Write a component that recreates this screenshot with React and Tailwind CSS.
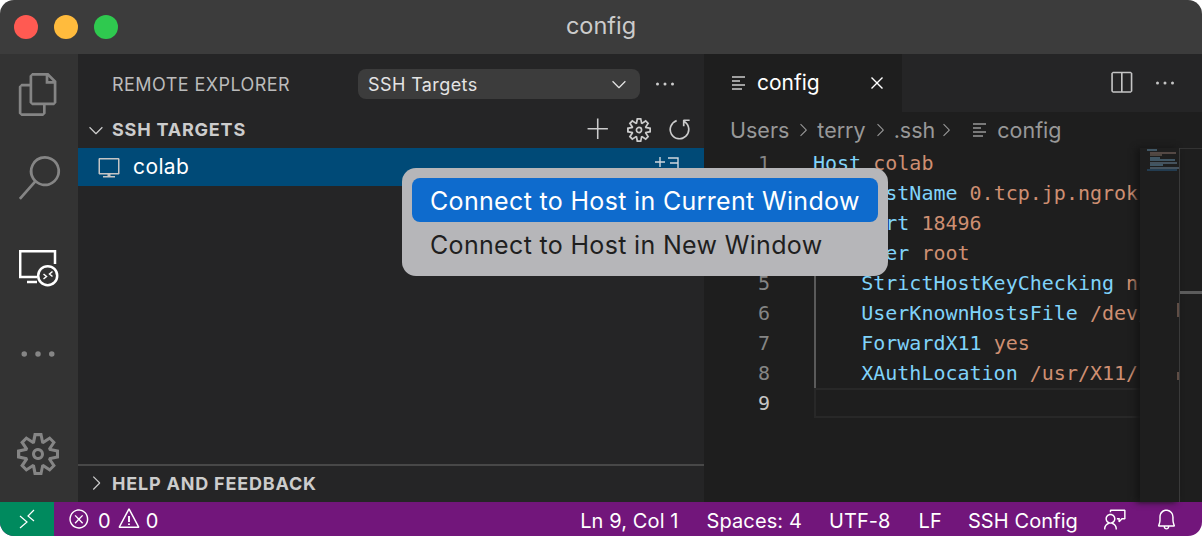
import React from 'react';
import {
  VscFiles, VscSearch, VscEllipsis, VscSettingsGear, VscChevronDown, VscChevronRight,
  VscAdd, VscRefresh, VscSplitHorizontal, VscClose, VscVm, VscError, VscWarning, VscFeedback, VscBell,
} from 'react-icons/vsc';

const uiFont = "font-['Inter','Liberation_Sans',sans-serif]";

const RemoteIcon = () => (
  <svg width="40" height="38" viewBox="0 0 40 38" fill="none" stroke="currentColor" strokeWidth="2.500">
    <path d="M18 27H1.200V1.200H36V14" />
    <path d="M8 32H18" />
    <circle cx="28.700" cy="25.700" r="9.500" />
    <path d="M24.500 24l3 2.500-3 2.500M33.500 21.500l-3 2.500 3 2.500" strokeWidth="1.500" />
  </svg>
);

const FileLines = ({ className }) => (
  <svg width="16" height="16" viewBox="0 0 16 16" fill="none" stroke="currentColor" strokeWidth="1.400" className={className}>
    <path d="M1 2H14M1 6H9M1 10H14M1 14H11" />
  </svg>
);

const RemoteStatus = () => (
  <svg width="18" height="20" viewBox="0 0 18 20" fill="none" stroke="currentColor" strokeWidth="1.200">
    <path d="M2 7l7 6-7 6M16 1L10 7l6 5" />
  </svg>
);

const codeLines = [
  [null, 'Host', 'colab'],
  ['    ', 'HostName', '0.tcp.jp.ngrok'],
  ['    ', 'Port', '18496'],
  ['    ', 'User', 'root'],
  ['    ', 'StrictHostKeyChecking', 'no'],
  ['    ', 'UserKnownHostsFile', '/dev/'],
  ['    ', 'ForwardX11', 'yes'],
  ['    ', 'XAuthLocation', '/usr/X11/'],
];

const ActivityBar = () => (
  <div className="w-[78px] shrink-0 bg-[#333333] flex flex-col items-center text-[#858585]">
    <VscFiles size={43} className="mt-[19px] ml-[-2px]" />
    <VscSearch size={44} className="mt-[40px]" />
    <div className="mt-[50px] text-white ml-[-1px]">
      <RemoteIcon />
    </div>
    <VscEllipsis size={44} className="mt-[44px] ml-[-2px]" />
    <div className="flex-1" />
    <VscSettingsGear size={42} className="mb-[27px] ml-[-3px]" />
  </div>
);

const SideBar = () => (
  <div className="w-[626px] shrink-0 bg-[#252526] flex flex-col">
    <div className="h-[60px] flex items-center pl-[34px]">
      <span className="w-[246px] text-[18px] tracking-[0.45px] text-[#bbbbbb]">REMOTE EXPLORER</span>
      <div className="w-[282px] h-[30px] rounded-[8px] bg-[#3c3c3c] flex items-center px-[10px] text-[#e4e4e4] text-[18px] tracking-[0.4px]">
        <span className="flex-1">SSH Targets</span>
        <VscChevronDown size={22} />
      </div>
      <VscEllipsis size={24} className="ml-[13px] text-[#cccccc]" />
    </div>
    <div className="h-[34px] pb-[3px] flex items-center text-[#cccccc]">
      <VscChevronDown size={22} className="ml-[7px]" />
      <span className="ml-[5px] flex-1 text-[18px] font-bold tracking-[0.8px]">SSH TARGETS</span>
      <VscAdd size={25} className="mr-[16px]" />
      <VscSettingsGear size={24} className="mr-[15px]" />
      <VscRefresh size={27} className="mr-[11px] scale-x-[-1]" />
    </div>
    <div className="h-[38px] bg-[#004a77] flex items-center pl-[19px] text-white">
      <VscVm size={24} className="text-[#c5c5c5]" />
      <span className="ml-[12px] text-[21px] tracking-[0.4px]">colab</span>
      <span className="flex-1" />
      <svg width="26" height="14" viewBox="0 0 26 14" fill="none" stroke="#d0d8de" strokeWidth="1.400" className="mr-[24px] mb-[9px]">
        <path d="M1 6H11M6 1V11M14 2H24V13H14M16 7H24" />
      </svg>
    </div>
    <div className="flex-1" />
    <div className="h-[38px] pb-[2px] border-t-2 border-[#484848] flex items-center text-[#cccccc]">
      <VscChevronRight size={22} className="ml-[7px]" />
      <span className="ml-[5px] text-[18px] font-bold tracking-[0.8px]">HELP AND FEEDBACK</span>
    </div>
  </div>
);

const Editor = () => (
  <div className="flex-1 min-w-0 bg-[#1e1e1e] flex flex-col relative">
    <div className="h-[58px] shrink-0 bg-[#252526] flex items-center">
      <div className="w-[198px] h-full bg-[#1e1e1e] flex items-center pl-[27px] text-white">
        <FileLines className="text-[#cccccc]" />
        <span className="ml-[10px] text-[21px] flex-1">config</span>
        <VscClose size={22} className="mr-[14px]" />
      </div>
      <div className="flex-1" />
      <VscSplitHorizontal size={26} className="text-[#c5c5c5] mr-[19px]" />
      <VscEllipsis size={24} className="text-[#c5c5c5] mr-[25px]" />
    </div>
    <div className="h-[36px] shrink-0 flex items-center pl-[26px] text-[21.500px] text-[#989898]">
      <span>Users</span>
      <VscChevronRight size={20} className="mx-[4px]" />
      <span>terry</span>
      <VscChevronRight size={20} className="mx-[4px]" />
      <span>.ssh</span>
      <VscChevronRight size={20} className="ml-[1px] mr-[16px]" />
      <FileLines />
      <span className="ml-[9px]">config</span>
    </div>
    <div className="flex-1 flex min-h-0">
      <div className="w-[66px] shrink-0 text-right font-['DejaVu_Sans_Mono',monospace] text-[20px] leading-[30px] text-[#858585]">
        {[1, 2, 3, 4, 5, 6, 7, 8].map((n) => (
          <div key={n}>{n}</div>
        ))}
        <div className="text-[#c6c6c6]">9</div>
      </div>
      <div className="w-[327px] ml-[43px] shrink-0 overflow-hidden font-['DejaVu_Sans_Mono',monospace] text-[20px] leading-[30px] whitespace-pre relative">
        <div className="absolute left-[1px] top-[30px] h-[210px] w-[2px] bg-[#5a5a5a]" />
        {codeLines.map(([indent, key, value]) => (
          <div key={key}>
            {indent}
            <span className="text-[#80d3fa]">{key}</span> <span className="text-[#ce8f72]">{value}</span>
          </div>
        ))}
        <div className="h-[30px] ml-[1px] border-y-2 border-[#282828] border-l-2" />
      </div>
      {/* minimap */}
      <div className="w-[40px] shrink-0 border-r border-[#3a3a3a] relative shadow-[-4px_0_6px_#151515]">
        <div className="pt-[1px] pl-[7px] flex flex-col gap-[0.500px] opacity-70">
          <div className="w-[10px] h-[2px] bg-[#4f6f82]" />
          <div className="w-[26px] ml-[3px] h-[2px] bg-[#6b5a55]" />
          <div className="w-[12px] ml-[3px] h-[2px] bg-[#63584f]" />
          <div className="w-[10px] ml-[3px] h-[2px] bg-[#4f6f82]" />
          <div className="w-[25px] ml-[3px] h-[2px] bg-[#4f6f82]" />
          <div className="w-[27px] ml-[3px] h-[2px] bg-[#566878]" />
          <div className="w-[13px] ml-[3px] h-[2px] bg-[#4f6f82]" />
          <div className="w-[29px] ml-[3px] h-[2px] bg-[#566878]" />
          <div className="w-[30px] h-[2px] bg-[#264a66]" />
        </div>
        <div className="absolute right-0 top-[155px] w-[2px] h-[14px] bg-[#5f4d45]" />
        <div className="absolute right-0 top-[224px] w-[2px] h-[8px] bg-[#5f4d45]" />
      </div>
      <div className="flex-1 relative">
        <div className="h-[1px] bg-[#333333]" />
        <div className="mt-[142px] h-[3px] bg-[#5c5c5c]" />
      </div>
    </div>
  </div>
);

const StatusBar = () => (
  <div className="h-[34px] shrink-0 bg-[#72167b] flex items-center text-[20px] tracking-[0.1px] text-white">
    <div className="w-[54px] h-full bg-[#008a5e] flex items-center justify-center">
      <RemoteStatus />
    </div>
    <VscError size={22} className="ml-[14px]" />
    <span className="ml-[8px] pt-[3px]">0</span>
    <VscWarning size={24} className="ml-[6px]" />
    <span className="ml-[5px] pt-[3px]">0</span>
    <div className="flex-1" />
    <span className="pt-[3px]">Ln 9, Col 1</span>
    <span className="ml-[28px] pt-[3px]">Spaces: 4</span>
    <span className="ml-[27px] pt-[3px]">UTF-8</span>
    <span className="ml-[28px] pt-[3px]">LF</span>
    <span className="ml-[26px] pt-[3px]">SSH Config</span>
    <VscFeedback size={23} className="ml-[26px]" />
    <VscBell size={23} className="ml-[28px] mr-[24px]" />
  </div>
);

const ContextMenu = () => (
  <div className="absolute left-[402px] top-[168px] w-[486px] h-[108px] rounded-[14px] bg-[#b6b6b9] p-[10px] text-[25px] tracking-[0.33px]">
    <div className="h-[44px] pt-[3px] rounded-[8px] bg-[#0e6bcd] text-white flex items-center pl-[18px]">Connect to Host in Current Window</div>
    <div className="h-[44px] pt-[3px] text-[#1f1f1f] flex items-center pl-[18px]">Connect to Host in New Window</div>
  </div>
);

export default function App() {
  return (
    <div className={`relative w-[1202px] h-[536px] bg-white ${uiFont}`}>
      <div className="w-full h-full rounded-[14px] overflow-hidden flex flex-col">
        <div className="h-[54px] shrink-0 bg-[#3c3c3c] flex items-center relative pl-[14px] gap-[16px]">
          <span className="w-[24px] h-[24px] rounded-full bg-[#ff5a52]" />
          <span className="w-[24px] h-[24px] rounded-full bg-[#ffbb3d]" />
          <span className="w-[24px] h-[24px] rounded-full bg-[#2fc94f]" />
          <span className="absolute inset-0 pb-[2px] flex items-center justify-center text-[23.500px] text-[#cccccc]">config</span>
        </div>
        <div className="flex-1 min-h-0 flex">
          <ActivityBar />
          <SideBar />
          <Editor />
        </div>
        <StatusBar />
      </div>
      <ContextMenu />
    </div>
  );
}
